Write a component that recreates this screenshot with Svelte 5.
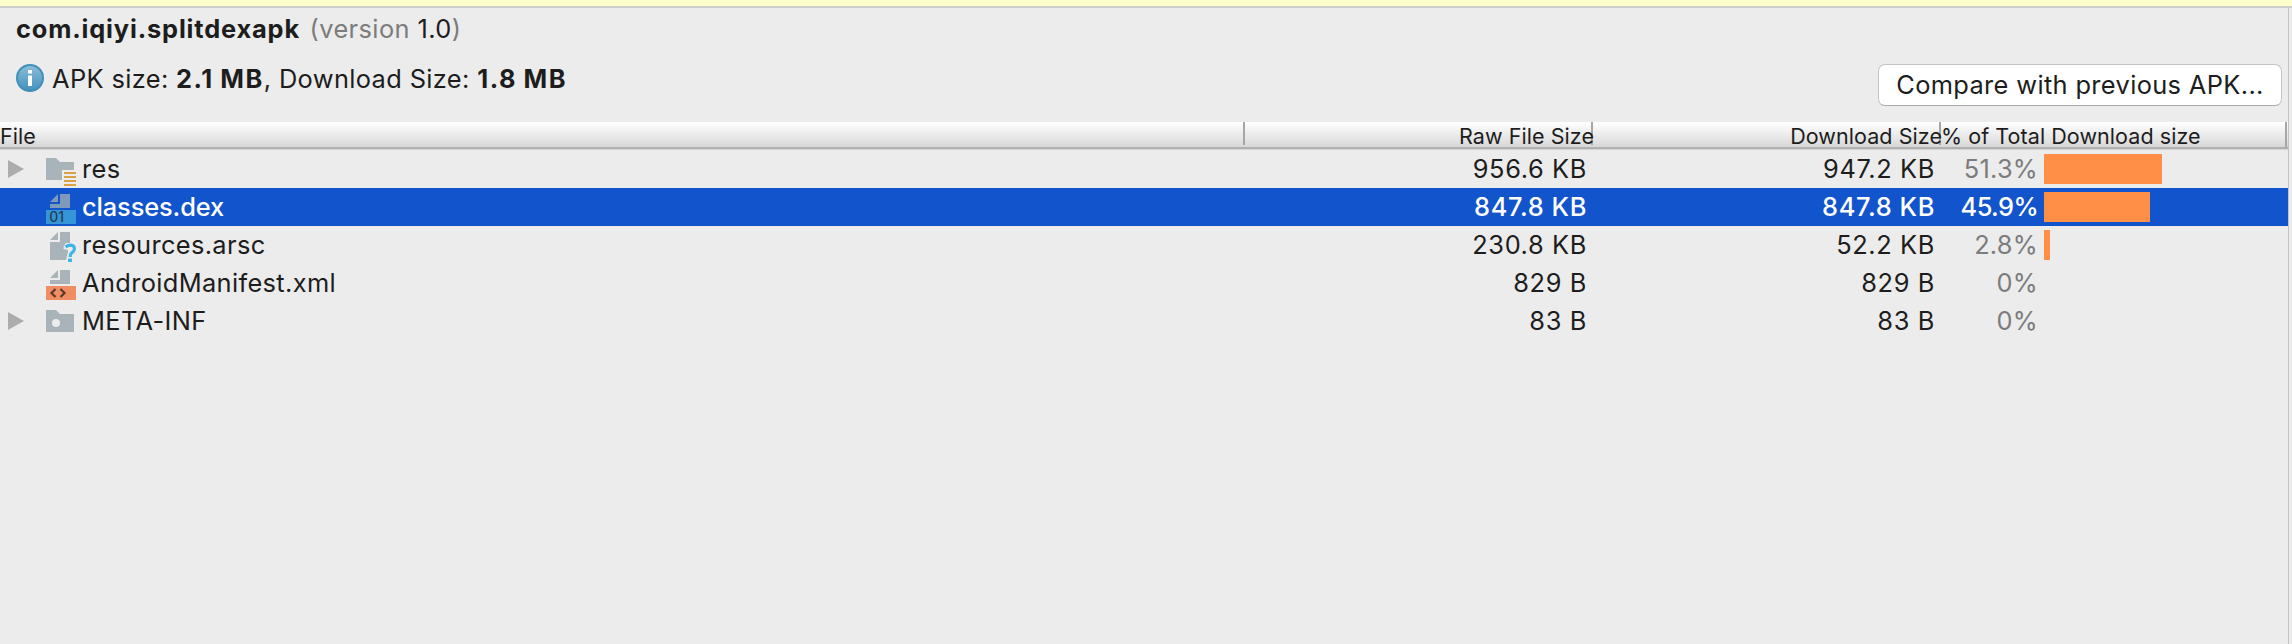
<script>
  const rows = [
    { name: 'res', icon: 'res', expandable: true, raw: '956.6 KB', download: '947.2 KB', percent: '51.3%', share: 51.3 },
    { name: 'classes.dex', icon: 'dex', selected: true, raw: '847.8 KB', download: '847.8 KB', percent: '45.9%', share: 45.9 },
    { name: 'resources.arsc', icon: 'arsc', raw: '230.8 KB', download: '52.2 KB', percent: '2.8%', share: 2.8 },
    { name: 'AndroidManifest.xml', icon: 'xml', raw: '829 B', download: '829 B', percent: '0%', share: 0 },
    { name: 'META-INF', icon: 'folder', expandable: true, raw: '83 B', download: '83 B', percent: '0%', share: 0 }
  ];
  const fullBar = 230;
</script>

<main>
  <div class="banner"></div>
  <div class="panel">
    <header>
      <div class="summary">
        <div class="title"><b>com.iqiyi.splitdexapk</b> <span class="version"><i>(version</i> 1.0<i>)</i></span></div>
        <div class="sizes">
          <svg width="28" height="28" viewBox="0 0 28 28">
            <defs>
              <linearGradient id="info" x1="0" y1="0" x2="0" y2="1">
                <stop offset="0" stop-color="#8dbdd8" />
                <stop offset="1" stop-color="#4191bd" />
              </linearGradient>
            </defs>
            <circle cx="14" cy="14" r="13" fill="url(#info)" stroke="#438fb9" stroke-width="2" />
            <path d="M12 6h4v3.5h-4zM12 11.5h4V22h-4z" fill="#fff" />
          </svg>
          <span class="line">APK size: <b>2.1 MB</b>, Download Size: <b>1.8 MB</b></span>
        </div>
      </div>
      <button>Compare with previous APK...</button>
    </header>

    <div class="thead">
      <div class="cell">File</div>
      <div class="cell end"><span>Raw File Size</span></div>
      <div class="cell end"><span>Download Size</span></div>
      <div class="cell last">% of Total Download size</div>
    </div>

    {#each rows as row}
      <div class="row" class:selected={row.selected}>
        <div class="file">
          <svg class="arrow" width="16" height="18" viewBox="0 0 16 18">
            {#if row.expandable}<path d="M0 0L16 9L0 18z" fill="#acacac" />{/if}
          </svg>
          <svg class="icon" width="32" height="32" viewBox="0 0 32 32">
            {#if row.icon === 'res'}
              <path d="M1 2H11L15 6H29V14H17V24H1z" fill="#a9b4ba" />
              <path d="M19 16h12v2H19zM19 20h12v2H19zM19 24h12v2H19zM19 28h12v2H19z" fill="#d9a343" />
            {:else if row.icon === 'folder'}
              <path d="M1 2H11L15 6H29V24H1z" fill="#a9b4ba" />
              <circle cx="11" cy="15" r="4" fill="#ececec" />
            {:else if row.icon === 'dex'}
              <path d="M13 0V8H5zM15 0H25V14H5V10H15z" fill="#7f99ba" />
              <path d="M1 16H31V30H1z" fill="#3595d7" />
              <text x="4.2" y="28" class="glyph" fill="#233f58">01</text>
            {:else if row.icon === 'arsc'}
              <path d="M13 0V8H5zM15 0H25V11H21Q18.5 13 18.5 17L23 18V20L21 28H5V10H15z" fill="#a9b4ba" />
              <path d="M20.5 15Q23 13.2 25.5 13.2Q29.6 13.4 29.4 16.8Q29.2 19 27 20.6Q25.2 22 25.2 25" fill="none" stroke="#41b6e6" stroke-width="3.2" />
              <path d="M23 26.5h4V30h-4z" fill="#41b6e6" />
            {:else}
              <path d="M13 0V8H5zM15 0H25V14H5V10H15z" fill="#a9b4ba" />
              <path d="M1 16H31V30H1z" fill="#f08d62" />
              <path d="M10.5 19L6.5 23L10.5 27M15.5 19L19.5 23L15.5 27" fill="none" stroke="#5b3a2c" stroke-width="2.2" />
            {/if}
          </svg>
          <span>{row.name}</span>
        </div>
        <div class="num">{row.raw}</div>
        <div class="num">{row.download}</div>
        <div class="percent">{row.percent}</div>
        <div class="bar" style:width="{Math.round(row.share * fullBar / 100)}px"></div>
      </div>
    {/each}
  </div>
</main>

<style>
  :global(body) { background: #ececec; }
  main {
    display: flex;
    flex-direction: column;
    height: 644px;
    overflow: hidden;
    background: #ececec;
    color: #1d1d1d;
    font-family: Inter, "Liberation Sans", sans-serif;
    font-size: 25.4px;
    letter-spacing: 0.36px;
    white-space: nowrap;
  }
  .banner { height: 6px; flex: none; background: #ffffcc; border-bottom: 2px solid #cdcdcd; }
  .panel { flex: 1; margin-right: 3px; border-right: 1px solid #c6c6c6; }
  header { display: flex; justify-content: space-between; height: 114px; }
  .summary { padding: 5px 0 0 16px; }
  .title { height: 32px; line-height: 32px; }
  .title b { letter-spacing: 0.84px; }
  .title i { color: #7c7c7c; font-style: normal; }
  .version { margin-left: 2px; letter-spacing: 0.4px; }
  .sizes { display: flex; align-items: center; gap: 8px; height: 32px; line-height: 32px; margin-top: 17px; }
  .sizes b { letter-spacing: 1.5px; word-spacing: -1px; }
  .line { letter-spacing: 0.37px; padding-top: 1px; }
  b { font-weight: 700; }
  button {
    width: 404px;
    height: 42px;
    margin: 56px 6px 0 0;
    padding: 0;
    border: 1px solid #c4c4c4;
    border-bottom-color: #a9a9a9;
    border-radius: 7px;
    background: #fff;
    color: inherit;
    font: inherit;
    letter-spacing: 0.36px;
    line-height: 38px;
  }
  .thead {
    display: grid;
    grid-template-columns: 1245px 348px 348px 1fr;
    box-sizing: border-box;
    height: 27px;
    margin-bottom: 1px;
    border-bottom: 2px solid #b0b0b0;
    box-shadow: 0 1px #d4d4d4;
    background: linear-gradient(#fff, #d8d8d8);
    font-size: 21.5px;
    letter-spacing: 0.06px;
    line-height: 28px;
  }
  .cell { height: 23px; border-right: 2px solid #a6a6a6; box-sizing: border-box; }
  .end { display: flex; justify-content: flex-end; }
  .end span { margin-right: -3px; }
  .last { height: 25px; margin-right: 1px; }
  .row {
    display: grid;
    grid-template-columns: 1239px 348px 348px 103px auto;
    align-items: center;
    height: 38px;
    line-height: 38px;
  }
  .file { display: flex; align-items: center; height: 38px; padding-left: 8px; }
  .icon { align-self: flex-end; margin: 0 5px 0 21px; }
  .num, .percent { text-align: right; }
  .num { letter-spacing: 0.62px; }
  .percent { color: #7c7c7c; letter-spacing: 0.25px; }
  .bar { height: 30px; margin-left: 6px; background: #ff8e47; }
  .selected { background: #1254cc; }
  .selected, .selected .percent { color: #fff; font-weight: 500; }
  .selected .file { letter-spacing: -0.12px; }
  .selected .percent { letter-spacing: -0.6px; }
  .glyph { font: 500 14px Inter, sans-serif; letter-spacing: 0; }
</style>
